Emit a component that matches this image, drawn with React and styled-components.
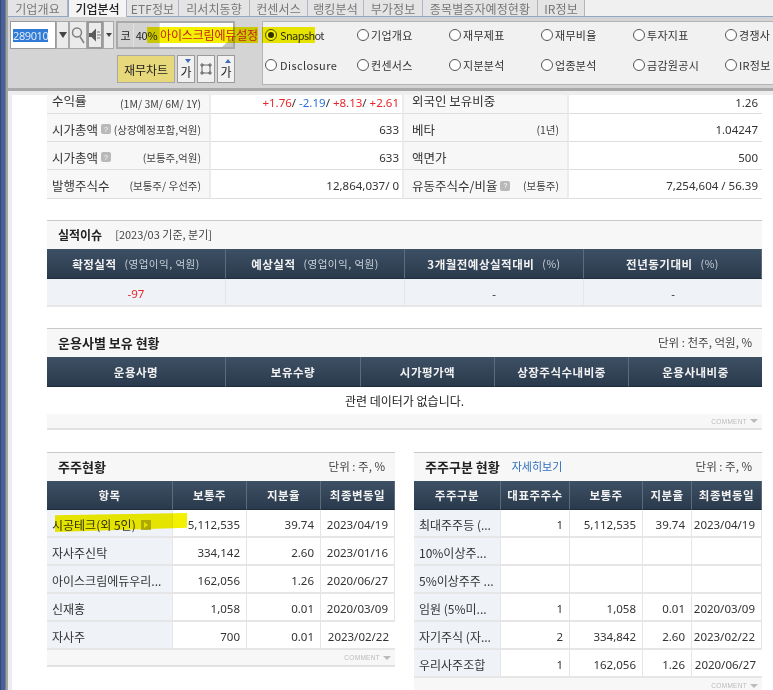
import styled, { createGlobalStyle } from 'styled-components';

const kr = `"Noto Sans CJK KR", "Liberation Sans", sans-serif`;
const num = `"Noto Sans", "Open Sans", "Liberation Sans", sans-serif`;

const GlobalStyle = createGlobalStyle`
  html, body { margin: 0; padding: 0; background: #fff; }
  body { width: 773px; height: 690px; overflow: hidden; font-family: ${kr}; }
  * { box-sizing: border-box; }
`;

const tabs = ['기업개요', '기업분석', 'ETF정보', '리서치동향', '컨센서스', '랭킹분석', '부가정보', '종목별증자예정현황', 'IR정보'];
const tabWidths = [60, 59, 52, 71, 58, 56, 59, 115, 47];

const radios = ['Snapshot', '기업개요', '재무제표', '재무비율', '투자지표', '경쟁사', 'Disclosure', '컨센서스', '지분분석', '업종분석', '금감원공시', 'IR정보'];

const Win = styled.div`
  width: 773px;
  height: 690px;
  display: flex;
  overflow: hidden;
  position: relative;
`;
const Edge = styled.div`
  width: 8px;
  flex: none;
  background: linear-gradient(90deg, #3c4668 0, #3c4668 1px, #45619f 1px, #45619f 5px, #7c7c7c 5px, #7c7c7c 6px, #a5a5a5 6px);
`;
const Main = styled.div`
  flex: 1;
  min-width: 0;
  overflow: hidden;
`;
const TabBar = styled.div`
  height: 17px;
  display: flex;
  background: #f0f0f0;
  border-bottom: 1px solid #8fa8c6;
`;
const Tab = styled.div`
  width: ${(p) => p.$w}px;
  height: ${(p) => (p.$active ? 17 : 16)}px;
  flex: none;
  display: flex;
  align-items: center;
  justify-content: center;
  font-size: 12px;
  letter-spacing: ${(p) => (p.$active ? 0 : 0.1)}px;
  color: ${(p) => (p.$active ? '#222' : '#777')};
  font-weight: ${(p) => (p.$active ? 500 : 400)};
  background: ${(p) => (p.$active ? '#f4f4f4' : '#e4e4e4')};
  border-right: 1px solid #aeb6c2;
  border-left: ${(p) => (p.$active ? '1px solid #8fa8c6' : 'none')};
`;
const Toolbar = styled.div`
  height: 74px;
  background: #d4d4d4;
  border-bottom: 3px solid #a9a9a9;
  display: flex;
  padding: 4px 0 0 2px;
  gap: 27px;
  position: relative;
`;
const LeftTools = styled.div`
  width: 225px;
  flex: none;
  display: flex;
  flex-direction: column;
  gap: 6px;
`;
const ToolRow = styled.div`
  display: flex;
  height: 28px;
  align-items: stretch;
  justify-content: ${(p) => (p.$end ? 'flex-end' : 'flex-start')};
  gap: ${(p) => p.$gap || 0}px;
`;
const CodeBox = styled.div`
  width: 46px;
  background: #fff;
  border: 1px solid #9a9a9a;
  padding-left: 2px;
  display: flex;
  align-items: center;
`;
const CodeText = styled.span`
  background: #2f7bd6;
  color: #dfeaf7;
  font: 11px/13px ${num};
  letter-spacing: -0.4px;
`;
const IconBtn = styled.div`
  width: ${(p) => p.$w}px;
  flex: none;
  background: #ebebeb;
  border: ${(p) => (p.$strong ? '2px solid #9a9a9a' : '1px solid #a8a8a8')};
  display: flex;
  align-items: center;
  justify-content: center;
`;
const NameBox = styled.div`
  flex: 1;
  margin-left: 2px;
  display: flex;
  border: 2px solid #a9a9a9;
  background: #fff;
  position: relative;
`;
const GreyCell = styled.div`
  width: ${(p) => p.$w}px;
  flex: none;
  background: #d2d2d2;
  border-right: 1px solid #e2e2e2;
  font: 11px ${kr};
  letter-spacing: -0.3px;
  display: flex;
  align-items: center;
  justify-content: center;
  color: #222;
`;
const Corner = styled.div`
  position: absolute;
  right: 0;
  bottom: 0;
  border-style: solid;
  border-width: 0 0 10px 11px;
  border-color: transparent transparent #c4c4c4 transparent;
`;
const YellowMark = styled.div`
  position: absolute;
  left: ${(p) => p.$x}px;
  top: ${(p) => p.$y}px;
  width: ${(p) => p.$w}px;
  height: ${(p) => p.$h}px;
  background: #f4f100;
  mix-blend-mode: multiply;
  z-index: 3;
  clip-path: ${(p) => (p.$slant ? 'polygon(0 12%, 100% 0, 100% 78%, 0 100%)' : 'none')};
`;
const NameText = styled.div`
  position: absolute;
  left: 152px;
  top: 9px;
  height: 17px;
  color: #c3201f;
  font-size: 12px;
  line-height: 17px;
  white-space: nowrap;
  letter-spacing: -0.15px;
  z-index: 4;
`;
const ChartBtn = styled.div`
  width: 58px;
  background: #e8d87c;
  border: 1px solid #a8a8a8;
  font-size: 12px;
  color: #222;
  display: flex;
  align-items: center;
  justify-content: center;
`;
const FontBtn = styled.div`
  width: 18px;
  background: #f1f1f1;
  border: 1px solid #9a9a9a;
  position: relative;
  display: flex;
  align-items: ${(p) => (p.$center ? 'center' : 'flex-end')};
  justify-content: center;
  font-size: 12px;
  line-height: 20px;
  color: #222;
`;
const Arrow = styled.span`
  position: absolute;
  top: 3px;
  right: 3px;
  border-left: 3px solid transparent;
  border-right: 3px solid transparent;
  border-${(p) => (p.$up ? 'bottom' : 'top')}: 4px solid #3d6cc0;
`;
const RadioPanel = styled.div`
  width: 520px;
  height: 64px;
  background: #f1f1f1;
  border: 1px solid #b4b4b4;
  display: grid;
  grid-template-columns: repeat(6, 92px);
  grid-template-rows: 26px 33px;
  padding-left: 2px;
  flex: none;
`;
const Radio = styled.div`
  display: flex;
  align-items: center;
  gap: ${(p) => (p.$spacing !== undefined ? 3 : 2)}px;
  font: 11px ${kr};
  letter-spacing: ${(p) => (p.$spacing !== undefined ? p.$spacing : 0.3)}px;
  color: #333;
  white-space: nowrap;
`;
const Dot = styled.span`
  width: 12px;
  height: 12px;
  border-radius: 50%;
  border: 1px solid #555;
  background: #fff;
  flex: none;
  display: flex;
  align-items: center;
  justify-content: center;
  &::after {
    content: '';
    width: 6px;
    height: 6px;
    border-radius: 50%;
    background: ${(p) => (p.$on ? '#333' : 'transparent')};
  }
`;
const Content = styled.div`
  padding-left: 39px;
  height: 600px;
  overflow: hidden;
  position: relative;
  background: linear-gradient(90deg, #ededed 0, #ededed 4px, #fff 4px);
  &::before {
    content: '';
    position: absolute;
    top: 0;
    left: 0;
    right: 0;
    height: 4px;
    background: #eeeeee;
  }
`;
const InfoTable = styled.div`
  display: grid;
  grid-template-columns: 164px 193px 165px 193px;
  grid-template-rows: 23px 28px 28px 29px;
  width: 715px;
`;
const LabelCell = styled.div`
  background: #f7f7f7;
  border-bottom: 1px solid #dedede;
  border-right: 2px solid #ececec;
  display: flex;
  align-items: center;
  justify-content: space-between;
  padding: ${(p) => (p.$clip ? '0 8px 3px' : '3px 8px 0')} ${(p) => p.$pl || 5}px;
  padding-right: 8px;
  font-size: 12.5px;
  color: #333;
  white-space: nowrap;
`;
const Sub = styled.span`
  font-size: 10.5px;
  color: #444;
`;
const ClipSub = styled(Sub)`
  margin-top: 5px;
`;
const LabelMain = styled.span`
  display: flex;
  align-items: center;
  gap: 3px;
`;
const Help = styled.span`
  width: 10px;
  height: 10px;
  background: #b9b9b9;
  border-radius: 2px;
  display: inline-flex;
  align-items: center;
  justify-content: center;
  color: #fff;
  font: 7px "Liberation Sans", sans-serif;
`;
const ValueCell = styled.div`
  border-bottom: 1px solid #dedede;
  border-right: ${(p) => (p.$sep ? '2px solid #ececec' : 'none')};
  display: flex;
  align-items: center;
  justify-content: flex-end;
  padding: ${(p) => (p.$clip ? '0' : '3px')} ${(p) => (p.$sep ? 3 : 4)}px 0 0;
  font: 11.5px ${num};
  color: #333;
  white-space: pre;
`;
const Up = styled.span`color: #e8262a;`;
const Down = styled.span`color: #2a6fdc;`;
const Section = styled.section`
  width: ${(p) => p.$w || 715}px;
  margin-top: ${(p) => p.$mt || 0}px;
  flex: none;
`;
const SectionHead = styled.div`
  height: 29px;
  background: #f7f7f7;
  border-top: 1px solid #c8c8c8;
  display: flex;
  align-items: center;
  padding: 0 10px 2px 11px;
  font-size: ${(p) => (p.$small ? 12 : 13)}px;
`;
const SectionTitle = styled.strong`
  font-weight: 700;
  color: #222;
`;
const Period = styled.span`
  font-size: 11px;
  color: #444;
  margin-left: 13px;
`;
const MoreLink = styled.span`
  font-size: 11px;
  color: #2e6fc0;
  margin-left: 12px;
`;
const Unit = styled.span`
  margin-left: auto;
  font-size: 11.5px;
  color: #444;
`;
const Grid = styled.div`
  display: grid;
  grid-template-columns: ${(p) => p.$cols};
`;
const Th = styled.div`
  height: ${(p) => p.$h || 30}px;
  background: linear-gradient(#3e5064, #2a3a4d);
  border-right: 1px solid #5d6c7d;
  border-bottom: 1px solid #1f2c3a;
  color: #f2f2f2;
  font-size: 11.5px;
  font-weight: 700;
  letter-spacing: 0.5px;
  display: flex;
  align-items: center;
  justify-content: center;
  gap: 8px;
  white-space: nowrap;
  &:last-child { border-right: none; }
`;
const ThSub = styled.span`
  font-weight: 400;
  color: #c9d2dc;
  font-size: 10.5px;
  letter-spacing: 0.5px;
`;
const Td = styled.div`
  height: 28px;
  background: ${(p) => (p.$tint ? '#eff2f7' : '#fff')};
  border-bottom: 2px solid #e6e6e6;
  border-right: 1px solid #e6e6e6;
  display: flex;
  align-items: center;
  justify-content: ${(p) => (p.$center ? 'center' : p.$left ? 'flex-start' : 'flex-end')};
  padding: 3px ${(p) => (p.$left || p.$center ? 0 : 6)}px 0 ${(p) => (p.$left ? 5 : 0)}px;
  font: ${(p) => (p.$left ? `12px ${kr}` : `11.5px ${num}`)};
  color: ${(p) => (p.$red ? '#e8262a' : '#333')};
  white-space: nowrap;
  overflow: hidden;
  &:last-child { border-right: none; }
`;
const Empty = styled.div`
  height: 27px;
  display: flex;
  align-items: center;
  justify-content: center;
  font-size: 12px;
  color: #222;
`;
const CommentBar = styled.div`
  height: ${(p) => p.$h || 17}px;
  background: #f7f7f7;
  border-bottom: 2px solid #e2e2e2;
  display: flex;
  align-items: center;
  justify-content: flex-end;
  gap: 3px;
  padding-right: 4px;
  font: 6.5px "Liberation Sans", sans-serif;
  letter-spacing: 0.3px;
  color: #bbb;
`;
const CommentArrow = styled.span`
  border-left: 4px solid transparent;
  border-right: 4px solid transparent;
  border-top: 4px solid #bbb;
`;
const Columns = styled.div`
  display: flex;
  gap: 19px;
  margin-top: 22px;
`;
const OliveBox = styled.span`
  width: 10px;
  height: 10px;
  background: #b6b320;
  margin-left: 5px;
  flex: none;
  display: flex;
  align-items: center;
  justify-content: center;
  &::after {
    content: '';
    border-left: 4px solid #f0ee70;
    border-top: 3px solid transparent;
    border-bottom: 3px solid transparent;
  }
`;

const shareholders = [
  ['자사주신탁', '334,142', '2.60', '2023/01/16'],
  ['아이스크림에듀우리...', '162,056', '1.26', '2020/06/27'],
  ['신재홍', '1,058', '0.01', '2020/03/09'],
  ['자사주', '700', '0.01', '2023/02/22'],
];
const groups = [
  ['최대주주등 (...', '1', '5,112,535', '39.74', '2023/04/19'],
  ['10%이상주...', '', '', '', ''],
  ['5%이상주주 ...', '', '', '', ''],
  ['임원 (5%미...', '1', '1,058', '0.01', '2020/03/09'],
  ['자기주식 (자...', '2', '334,842', '2.60', '2023/02/22'],
  ['우리사주조합', '1', '162,056', '1.26', '2020/06/27'],
];

export default function App() {
  return (
    <Win>
      <GlobalStyle />
      <Edge />
      <Main>
        <TabBar>
          {tabs.map((t, i) => (
            <Tab key={t} $w={tabWidths[i]} $active={i === 1}>{t}</Tab>
          ))}
        </TabBar>
        <Toolbar>
          <LeftTools>
            <ToolRow>
              <CodeBox><CodeText>289010</CodeText></CodeBox>
              <IconBtn $w={13}>
                <svg width="8" height="6" viewBox="0 0 8 6"><path d="M0 0h8L4 6z" fill="#444" /></svg>
              </IconBtn>
              <IconBtn $w={18}>
                <svg width="14" height="18" viewBox="0 0 14 18" fill="none" stroke="#808080" strokeWidth="1.5">
                  <circle cx="6" cy="6.5" r="4.5" /><path d="M9 10.5 13 17" />
                </svg>
              </IconBtn>
              <IconBtn $w={16} $strong>
                <svg width="12" height="16" viewBox="0 0 12 16">
                  <path d="M0 6h2.5L7 1.5v13L2.5 10H0z" fill="#5a5a5a" />
                  <path d="M8 5h3M8 8h4M8 11h3" stroke="#777" />
                </svg>
              </IconBtn>
              <IconBtn $w={11}>
                <svg width="6" height="4" viewBox="0 0 6 4"><path d="M0 0h6L3 4z" fill="#444" /></svg>
              </IconBtn>
              <NameBox>
                <GreyCell $w={16}>코</GreyCell>
                <GreyCell $w={26}>40%</GreyCell>
                <Corner />
              </NameBox>
            </ToolRow>
            <ToolRow $end $gap={2}>
              <ChartBtn>재무차트</ChartBtn>
              <FontBtn>가<Arrow /></FontBtn>
              <FontBtn $center>
                <svg width="14" height="14" viewBox="0 0 14 14" fill="none" stroke="#666">
                  <path d="M3 3h8v8H3zM1 3h4M3 1v4M9 3h4M11 1v4M1 11h4M3 9v4M9 11h4M11 9v4" />
                </svg>
              </FontBtn>
              <FontBtn>가<Arrow $up /></FontBtn>
            </ToolRow>
          </LeftTools>
          <RadioPanel>
            {radios.map((label, i) => (
              <Radio key={label + i} $spacing={i === 0 ? -0.6 : i === 6 ? 0.4 : undefined}>
                <Dot $on={i === 0} />
                {label}
              </Radio>
            ))}
          </RadioPanel>
          <NameText>아이스크림에듀설정</NameText>
          <YellowMark $x={139} $y={10} $w={111} $h={16} />
          <YellowMark $x={254} $y={10} $w={53} $h={16} />
        </Toolbar>
        <Content>
          <InfoTable>
            <LabelCell $clip>수익률<ClipSub>(1M/ 3M/ 6M/ 1Y)</ClipSub></LabelCell>
            <ValueCell $sep $clip>
              <Up>+1.76</Up>/ <Down>-2.19</Down>/ <Up>+8.13</Up>/ <Up>+2.61</Up>
            </ValueCell>
            <LabelCell $clip $pl={8}>외국인 보유비중</LabelCell>
            <ValueCell $clip>1.26</ValueCell>

            <LabelCell><LabelMain>시가총액<Help>?</Help></LabelMain><Sub>(상장예정포함,억원)</Sub></LabelCell>
            <ValueCell $sep>633</ValueCell>
            <LabelCell $pl={8}>베타<Sub>(1년)</Sub></LabelCell>
            <ValueCell>1.04247</ValueCell>

            <LabelCell><LabelMain>시가총액<Help>?</Help></LabelMain><Sub>(보통주,억원)</Sub></LabelCell>
            <ValueCell $sep>633</ValueCell>
            <LabelCell $pl={8}>액면가</LabelCell>
            <ValueCell>500</ValueCell>

            <LabelCell>발행주식수<Sub>(보통주/ 우선주)</Sub></LabelCell>
            <ValueCell $sep>12,864,037/ 0</ValueCell>
            <LabelCell $pl={8}><LabelMain>유동주식수/비율<Help>?</Help></LabelMain><Sub>(보통주)</Sub></LabelCell>
            <ValueCell>7,254,604 / 56.39</ValueCell>
          </InfoTable>

          <Section $mt={21}>
            <SectionHead $small>
              <SectionTitle>실적이슈</SectionTitle>
              <Period>[2023/03 기준, 분기]</Period>
            </SectionHead>
            <Grid $cols="179px 179px 179px 178px">
              <Th>확정실적<ThSub>(영업이익, 억원)</ThSub></Th>
              <Th>예상실적<ThSub>(영업이익, 억원)</ThSub></Th>
              <Th>3개월전예상실적대비<ThSub>(%)</ThSub></Th>
              <Th>전년동기대비<ThSub>(%)</ThSub></Th>
              <Td $center $tint $red>-97</Td>
              <Td $center $tint />
              <Td $center $tint>-</Td>
              <Td $center $tint>-</Td>
            </Grid>
          </Section>

          <Section $mt={21}>
            <SectionHead>
              <SectionTitle>운용사별 보유 현황</SectionTitle>
              <Unit>단위 : 천주, 억원, %</Unit>
            </SectionHead>
            <Grid $cols="179px 135px 134px 134px 133px">
              <Th>운용사명</Th>
              <Th>보유수량</Th>
              <Th>시가평가액</Th>
              <Th>상장주식수내비중</Th>
              <Th>운용사내비중</Th>
            </Grid>
            <Empty>관련 데이터가 없습니다.</Empty>
            <CommentBar $h={16}>COMMENT<CommentArrow /></CommentBar>
          </Section>

          <Columns>
            <Section $w={348}>
              <SectionHead>
                <SectionTitle>주주현황</SectionTitle>
                <Unit>단위 : 주, %</Unit>
              </SectionHead>
              <Grid $cols="126px 74px 74px 74px">
                <Th $h={29}>항목</Th>
                <Th $h={29}>보통주</Th>
                <Th $h={29}>지분율</Th>
                <Th $h={29}>최종변동일</Th>
                <Td $left $tint>시공테크(외 5인)<OliveBox /></Td>
                <Td>5,112,535</Td>
                <Td>39.74</Td>
                <Td>2023/04/19</Td>
                {shareholders.map((r) => r.map((v, i) => (
                  <Td key={r[0] + i} $left={i === 0} $tint={i === 0}>{v}</Td>
                )))}
              </Grid>
              <CommentBar>COMMENT<CommentArrow /></CommentBar>
            </Section>
            <Section $w={348}>
              <SectionHead>
                <SectionTitle>주주구분 현황</SectionTitle>
                <MoreLink>자세히보기</MoreLink>
                <Unit>단위 : 주, %</Unit>
              </SectionHead>
              <Grid $cols="87px 69px 73px 49px 70px">
                <Th $h={29}>주주구분</Th>
                <Th $h={29}>대표주주수</Th>
                <Th $h={29}>보통주</Th>
                <Th $h={29}>지분율</Th>
                <Th $h={29}>최종변동일</Th>
                {groups.map((r) => r.map((v, i) => (
                  <Td key={r[0] + i} $left={i === 0} $tint={i === 0}>{v}</Td>
                )))}
              </Grid>
              <CommentBar>COMMENT<CommentArrow /></CommentBar>
            </Section>
          </Columns>
        </Content>
      </Main>
      <YellowMark $x={55} $y={513} $w={132} $h={19} $slant />
    </Win>
  );
}
